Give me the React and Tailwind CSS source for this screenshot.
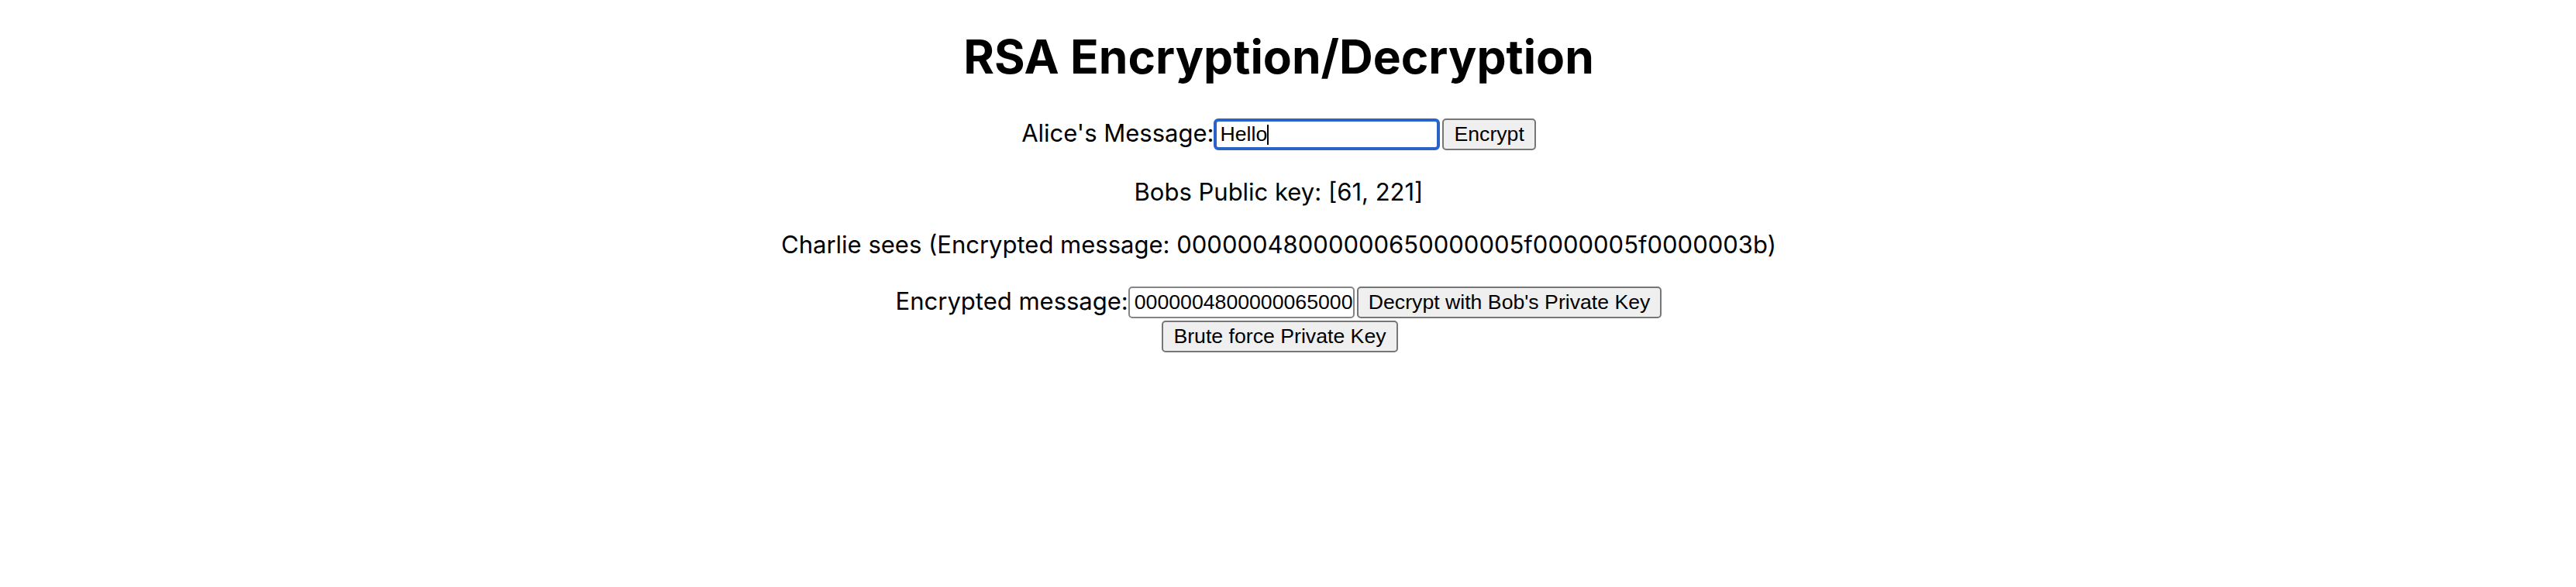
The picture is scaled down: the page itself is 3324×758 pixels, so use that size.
import React from 'react';

const hex = '00000048000000650000005f0000005f0000003b';

function App() {
    const inputBase = "h-[41px] w-[292px] bg-white text-black text-[26.67px] font-['Liberation_Sans',Arial,sans-serif] outline-none";
    const btn = "h-[41px] ml-[3px] border-2 border-[#767676] rounded-[5px] bg-[#efefef] text-black text-[26.67px] leading-none font-['Liberation_Sans',Arial,sans-serif]";

    return (
        <div className="w-[3300px] min-h-[758px] bg-white text-black font-['Inter',sans-serif] flex flex-col items-center">
            <h1 className="mt-[43px] text-[60.5px] leading-none font-bold">RSA Encryption/Decryption</h1>

            <div className="mt-[49.5px] flex items-start">
                <label className="mt-[3px] text-[31px] leading-none">Alice's Message:</label>
                <div className="relative">
                    <input
                        value="Hello"
                        readOnly
                        className={inputBase + " border-[4px] border-[#2a62c8] rounded-[6px] pl-[4px]"}
                    />
                    <span className="absolute left-[69px] top-[8px] w-[2px] h-[26px] bg-black"></span>
                </div>
                <button className={btn + " px-[13px]"}>Encrypt</button>
            </div>

            <p className="mt-[38px] text-[31px] leading-none">Bobs Public key: [61, 221]</p>

            <p className="mt-[37px] text-[31px] leading-none">Charlie sees (Encrypted message: {hex})</p>

            <div className="mt-[39px] flex items-start">
                <label className="mt-[3px] text-[31px] leading-none">Encrypted message:</label>
                <input
                    value={hex}
                    readOnly
                    className={inputBase + " border-2 border-[#858585] rounded-[5px] pl-[6px]"}
                />
                <button className={btn + " px-[13px]"}>Decrypt with Bob's Private Key</button>
            </div>

            <div className="mt-[3px]">
                <button className={btn + " ml-0 px-[13px]"}>Brute force Private Key</button>
            </div>
        </div>
    );
}

export default App;
